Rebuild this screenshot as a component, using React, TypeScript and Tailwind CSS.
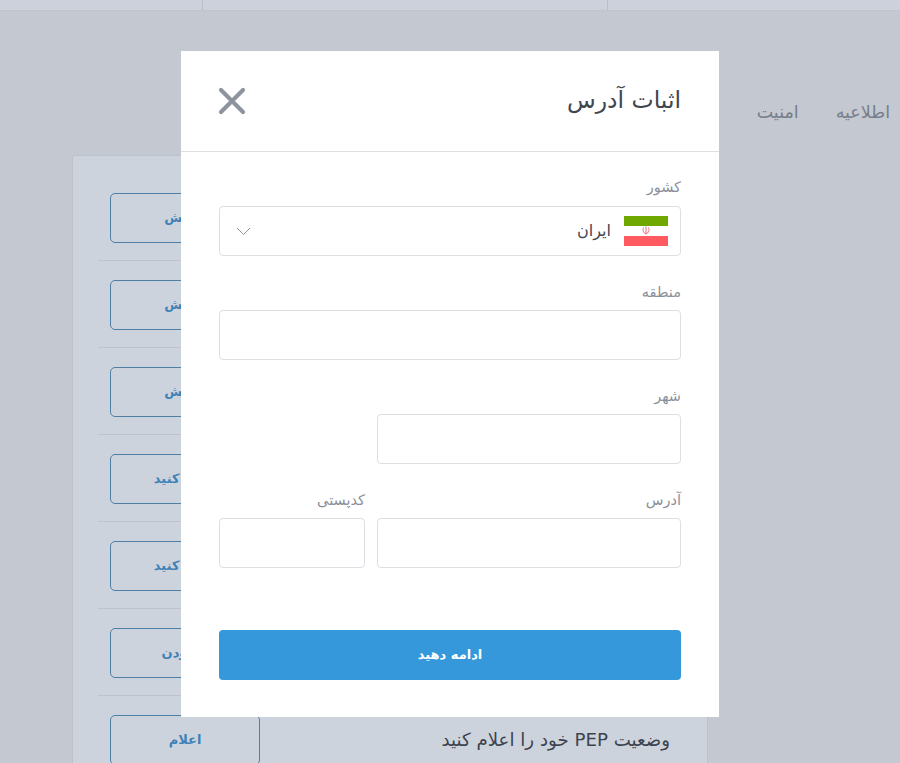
const font = "font-['DejaVu_Sans','Noto_Sans',sans-serif]"

const rows = [
  { label: 'نمایش', text: '' },
  { label: 'نمایش', text: '' },
  { label: 'نمایش', text: '' },
  { label: 'کامل کنید', text: '' },
  { label: 'کامل کنید', text: '' },
  { label: 'افزودن', text: '' },
  { label: 'اعلام', text: 'وضعیت PEP خود را اعلام کنید' },
]

function Field({ label, className }: { label: string; className?: string }) {
  return (
    <div className={className}>
      <label className="block h-[18px] mb-[10px] text-[14.5px] leading-[20px] text-[#8a9099]">{label}</label>
      <input className="block w-full h-[50px] bg-white border border-[#dcdfe3] rounded-[4px] outline-none" />
    </div>
  )
}

function IranFlag() {
  return (
    <svg width="44" height="30" viewBox="0 0 44 30">
      <rect width="44" height="10" fill="#6fa800" />
      <rect y="10" width="44" height="10" fill="#ffffff" />
      <rect y="20" width="44" height="10" fill="#ff5a60" />
      <path d="M22 10.5v7.5M19.5 11.5c-1.2 2.5 0 5.5 2.5 6.5M24.5 11.5c1.2 2.5 0 5.5-2.5 6.5" stroke="#e26a75" strokeWidth="1" fill="none" />
    </svg>
  )
}

export default function App() {
  return (
    <div dir="rtl" className={`relative w-[900px] h-[763px] overflow-hidden bg-[#c4c8d0] ${font}`}>
      {/* page behind the modal */}
      <div className="flex h-[11px] bg-[#ccd1dc] border-b border-[#bfc4cd]">
        <div className="w-[293px] border-l border-[#b9bec8]" />
        <div className="w-[405px] border-l border-[#b9bec8]" />
      </div>

      <div className="flex gap-[37px] h-[144px] pt-[90px] pr-[10px] text-[17.5px] leading-[22px] text-[#777e8c]">
        <span>اطلاعیه</span>
        <span>امنیت</span>
      </div>

      <div className="mr-[192px] w-[636px] h-[640px] bg-[#cdd3dc] border border-[#bcc1ca] rounded-t-[3px]">
        <div className="pt-[18px] px-[25px]">
          {rows.map((row, i) => (
            <div key={i} className="flex items-center justify-between h-[87px] pt-[1px] pr-[12px] pl-[12px] border-b border-[#bdc2cb] last:border-b-0">
              <span className="text-[18.2px] text-[#3c4350]">{row.text}</span>
              <button className="w-[150px] h-[50px] rounded-[5px] border border-[#4f7ea6] text-[13px] font-bold text-[#3f82b8]">
                {row.label}
              </button>
            </div>
          ))}
        </div>
      </div>

      {/* modal */}
      <div className="absolute left-[181px] top-[51px] w-[538px] h-[666px] bg-white">
        <div className="flex items-center justify-between h-[101px] px-[38px] border-b border-[#dcdfe3]">
          <h2 className="text-[23.5px] font-normal leading-none text-[#3f4650]">اثبات آدرس</h2>
          <svg width="28" height="28" viewBox="0 0 28 28" className="ml-[-1px]">
            <path d="M3 3l22 22M25 3L3 25" stroke="#8d949d" strokeWidth="4.2" strokeLinecap="round" />
          </svg>
        </div>

        <div className="px-[38px] pt-[25px]">
          <label className="block h-[18px] mb-[11px] text-[14.5px] leading-[20px] text-[#8a9099]">کشور</label>
          <div className="flex items-center h-[50px] pr-[12px] pl-[16px] bg-white border border-[#dcdfe3] rounded-[4px]">
            <IranFlag />
            <span className="mr-[13px] text-[16px] text-[#3f4650]">ایران</span>
            <svg width="15" height="9" viewBox="0 0 15 9" className="mr-auto">
              <path d="M1 1l6.5 6.5L14 1" stroke="#8d949d" strokeWidth="1" fill="none" />
            </svg>
          </div>

          <Field label="منطقه" className="mt-[26px]" />
          <Field label="شهر" className="mt-[26px] w-[304px]" />

          <div className="flex gap-[12px] mt-[26px]">
            <Field label="آدرس" className="flex-1" />
            <Field label="کدپستی" className="w-[146px]" />
          </div>

          <button className="w-full h-[50px] mt-[62px] rounded-[4px] bg-[#3498db] text-[13px] font-bold text-white">
            ادامه دهید
          </button>
        </div>
      </div>
    </div>
  )
}
